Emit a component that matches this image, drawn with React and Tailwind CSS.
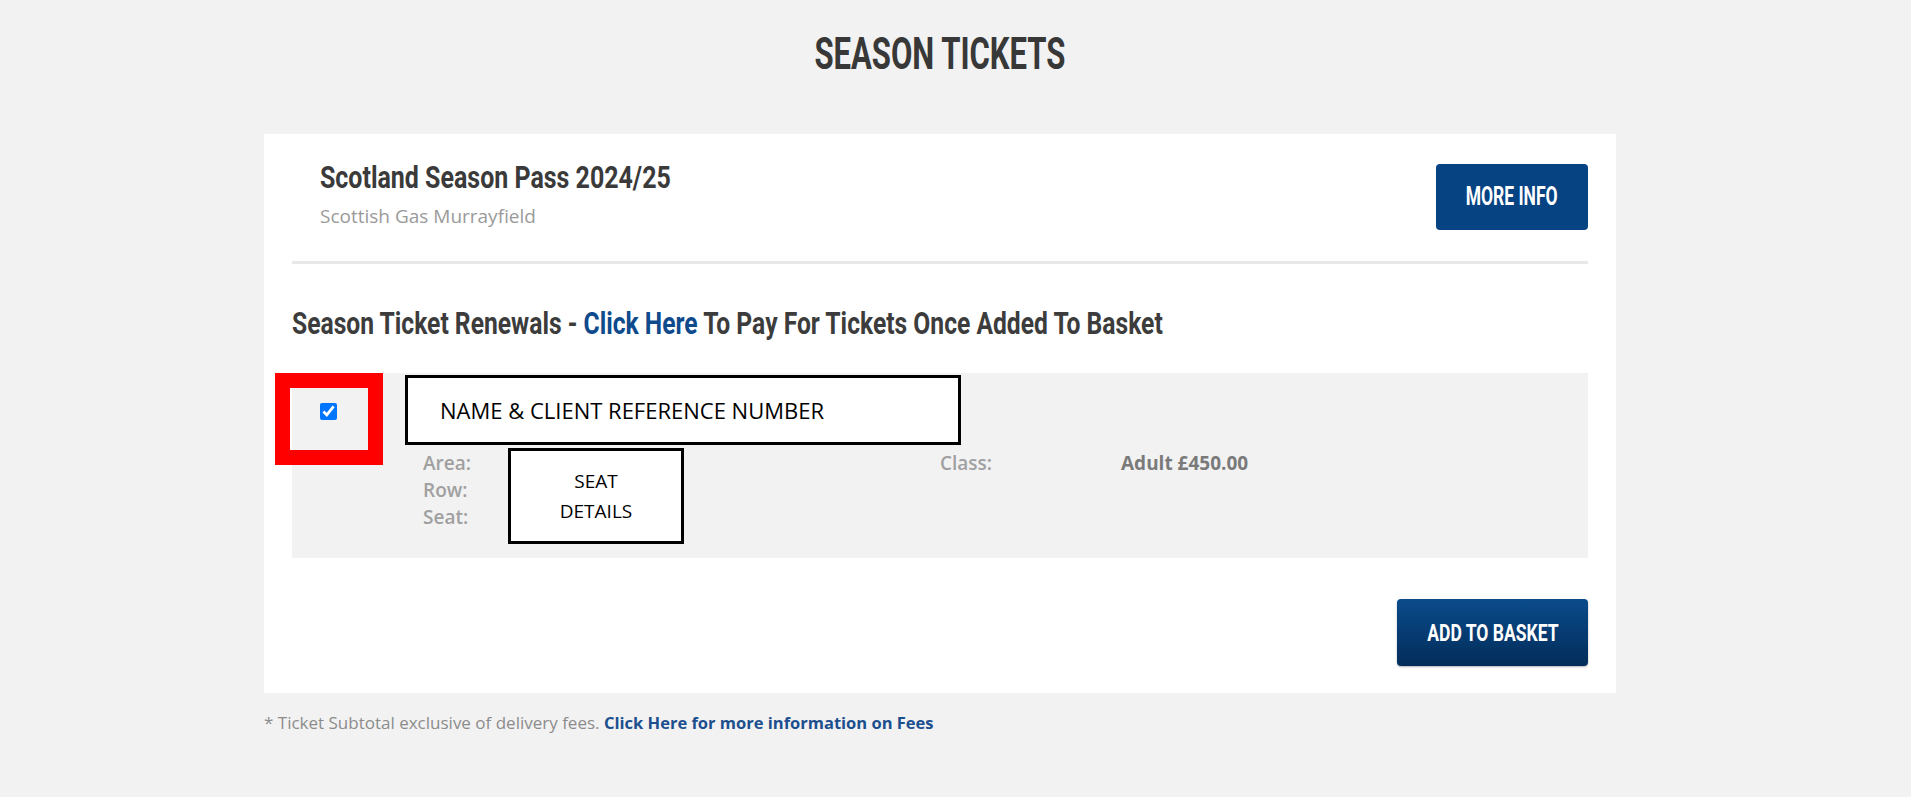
export default function App() {
  return (
    <div className="min-h-[797px] w-full bg-[#f2f2f2] font-['Open_Sans',sans-serif]">
      <div className="ml-[264px] w-[1352px]">
        {/* PAGE TITLE */}
        <div className="pt-[31px] text-center">
          <h1 className="inline-block origin-center scale-x-[0.69] font-['Roboto',sans-serif] text-[45px] font-bold leading-[45px] text-[#383838]">
            SEASON TICKETS
          </h1>
        </div>

        {/* CARD */}
        <div className="mt-[58px] bg-white px-[28px] pt-[30px] pb-[27px]">
          <div className="flex items-start justify-between">
            <div className="-mt-[3px] pl-[28px]">
              <h2 className="origin-left scale-x-[0.78] whitespace-nowrap font-['Roboto',sans-serif] text-[32px] font-bold leading-[32px] text-[#3a3a3a]">
                Scotland Season Pass 2024/25
              </h2>
              <p className="mt-[14px] text-[19px] leading-[18px] text-[#9a9a9a]">
                Scottish Gas Murrayfield
              </p>
            </div>
            <button className="flex h-[66px] w-[152px] items-center justify-center rounded-[4px] bg-[#064383]">
              <span className="inline-block scale-x-[0.7] font-['Roboto',sans-serif] text-[25px] font-bold text-white">
                MORE INFO
              </span>
            </button>
          </div>

          <div className="mt-[31px] h-[3px] bg-[#e8e8e8]" />

          <h3 className="mt-[44px] origin-left scale-x-[0.795] whitespace-nowrap font-['Roboto',sans-serif] text-[31px] font-bold leading-[31px] text-[#3c3c3c]">
            Season Ticket Renewals -{" "}
            <span className="text-[#0e4a8c]">Click Here</span> To Pay For
            Tickets Once Added To Basket
          </h3>

          {/* TICKET ROW */}
          <div className="relative mt-[34px] flex h-[185px] bg-[#f2f2f2]">
            <div className="w-[131px] pl-[28px] pt-[30px]">
              <input
                type="checkbox"
                defaultChecked
                className="m-0 block h-[17px] w-[17px] accent-[#0075ff]"
              />
            </div>
            <div className="flex flex-1 pt-[77px] text-[19px] leading-[27px] font-semibold">
              <div className="w-[517px] text-[#a0a0a0]">
                <div>Area:</div>
                <div>Row:</div>
                <div>Seat:</div>
              </div>
              <div className="w-[181px] text-[#a0a0a0]">Class:</div>
              <div className="font-bold text-[#7a7a7a]">Adult £450.00</div>
            </div>

            {/* redaction boxes */}
            <div className="absolute left-[113px] top-[2px] flex h-[70px] w-[556px] items-center border-[3px] border-black bg-white pl-[32px] text-[22px] text-black">
              NAME &amp; CLIENT REFERENCE NUMBER
            </div>
            <div className="absolute left-[216px] top-[75px] flex h-[96px] w-[176px] flex-col items-center justify-center border-[3px] border-black bg-white text-[19px] leading-[30px] text-black">
              <span>SEAT</span>
              <span>DETAILS</span>
            </div>
            <div className="absolute -left-[17px] top-0 h-[92px] w-[108px] border-[15px] border-[#ff0000]" />
          </div>

          <div className="mt-[41px] flex justify-end">
            <button className="flex h-[67px] w-[191px] items-center justify-center rounded-[4px] bg-gradient-to-b from-[#0b4b8b] to-[#032d5a] shadow-[0_1px_2px_rgba(0,0,0,0.3)]">
              <span className="inline-block scale-x-[0.73] font-['Roboto',sans-serif] text-[24px] font-bold text-white">
                ADD TO BASKET
              </span>
            </button>
          </div>
        </div>

        {/* FOOTNOTE */}
        <p className="mt-[20px] text-[17px] leading-[20px] text-[#8c8c8c]">
          * Ticket Subtotal exclusive of delivery fees.{" "}
          <span className="text-[16.5px] font-bold text-[#1c4f8e]">
            Click Here for more information on Fees
          </span>
        </p>
      </div>
    </div>
  );
}
